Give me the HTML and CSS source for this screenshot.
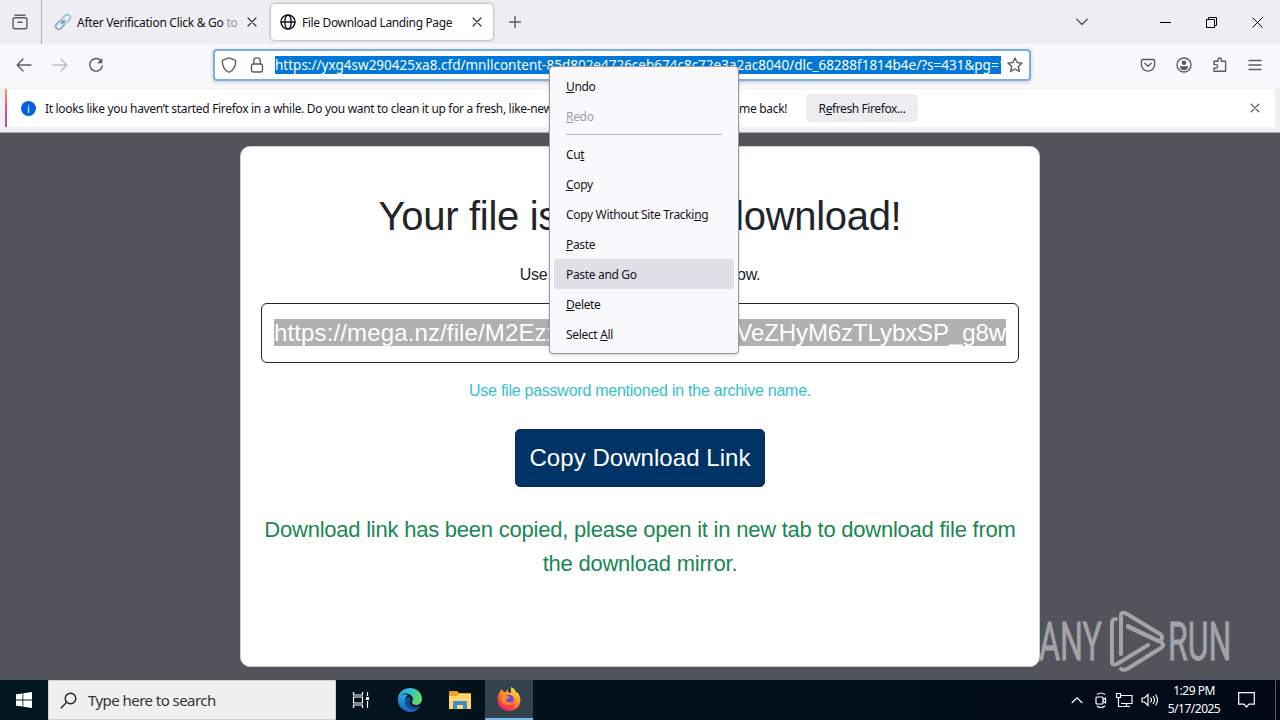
FILE: index.html
```html
<!DOCTYPE html>
<html lang="en">
<head>
    <meta charset="UTF-8">
    <meta name="viewport" content="width=device-width, initial-scale=1.0">
    <title>File Download Landing Page</title>
    <link rel="stylesheet" href="styles.css">
</head>
<body>
    <div class="desktop">
        <!-- tabs -->
        <div class="tab-bar">
            <div class="firefox-view">
                <svg class="icon" width="16" height="16" viewBox="0 0 16 16"><path d="M3 1.2h10"/><rect x="1" y="3.8" width="14" height="11" rx="2.2"/><path d="M6 8.3h4"/></svg>
            </div>
            <div class="tab">
                <svg width="18" height="18" viewBox="0 0 18 18" fill="none"><g transform="rotate(-45 9 9)"><rect x="0" y="6" width="9.5" height="6" rx="3" stroke="#7fb0c8" stroke-width="1.8"/><rect x="8.5" y="6" width="9.5" height="6" rx="3" stroke="#9cc4d6" stroke-width="1.8"/><path d="M6 9h6" stroke="#628da2" stroke-width="1.4"/></g></svg>
                <span class="tab-title tab-title-first">After Verification Click &amp; Go <span class="faded">to</span></span>
                <svg class="icon dark" width="10" height="10" viewBox="0 0 10 10"><path d="M1 1l8 8M9 1L1 9"/></svg>
            </div>
            <div class="tab active">
                <svg class="icon globe" width="16" height="16" viewBox="0 0 16 16"><circle cx="8" cy="8" r="7"/><ellipse cx="8" cy="8" rx="3.2" ry="7"/><path d="M1 8h14"/></svg>
                <span class="tab-title">File Download Landing Page</span>
                <svg class="icon dark" width="10" height="10" viewBox="0 0 10 10"><path d="M1 1l8 8M9 1L1 9"/></svg>
            </div>
            <svg class="icon new-tab" width="12" height="12" viewBox="0 0 12 12"><path d="M6 .5v11M.5 6h11"/></svg>
            <div class="window-buttons">
                <svg class="icon" width="12" height="8" viewBox="0 0 12 8"><path d="M.7 1.2L6 6.5l5.300-5.300"/></svg>
                <svg class="icon black" width="11" height="11" viewBox="0 0 11 11"><path d="M0 5.500h11"/></svg>
                <svg class="icon black" width="11" height="11" viewBox="0 0 11 11"><path d="M.5 2.500h8v8h-8zM2.500 2.500v-2h8v8h-2"/></svg>
                <svg class="icon black thin" width="11" height="11" viewBox="0 0 11 11"><path d="M.5.5l10 10M10.500.5l-10 10"/></svg>
            </div>
        </div>

        <!-- toolbar -->
        <div class="nav-bar">
            <div class="nav-buttons">
                <svg class="icon" width="16" height="14" viewBox="0 0 16 14"><path d="M15 7H1.500M7 1L1.200 7 7 13"/></svg>
                <svg class="icon disabled" width="16" height="14" viewBox="0 0 16 14"><path d="M1 7h13.500M9 1l5.800 6L9 13"/></svg>
                <svg class="icon" width="16" height="16" viewBox="0 0 16 16"><path d="M12.800 3.600A6.300 6.300 0 1 0 14.300 9"/><path d="M14.300 1v5.200H9z" fill="#5b5b66" stroke="none"/></svg>
            </div>
            <div class="url-bar">
                <svg class="icon" width="16" height="16" viewBox="0 0 16 16"><path d="M8 .9l6 2.300c.5.200.700.600.700 1.100-.1 5-2.200 8.700-6 10.700-.5.200-.9.200-1.400 0-3.800-2-5.900-5.700-6-10.700 0-.5.200-.9.700-1.100z"/></svg>
                <svg class="icon" width="14" height="16" viewBox="0 0 14 16"><rect x="1.500" y="7" width="11" height="8" rx="1.800"/><path d="M3.700 7V4.200a3.300 3.300 0 0 1 6.600 0V7"/></svg>
                <div class="url"><span>https://yxg4sw290425xa8.cfd/mnllcontent-85d802e4726ceb674c8c72e3a2ac8040/dlc_68288f1814b4e/?s=431&amp;pg=1</span></div>
                <svg class="icon" width="16" height="16" viewBox="0 0 16 16"><path d="M8 1l2.100 4.500 4.900.6-3.600 3.400.9 4.900L8 12l-4.300 2.400.9-4.900L1 6.100l4.900-.6z"/></svg>
            </div>
            <div class="nav-tools">
                <svg class="icon" width="16" height="16" viewBox="0 0 16 16"><path d="M3 2.500h10c1 0 1.600.6 1.600 1.600v3.400a6.600 6.600 0 0 1-13.200 0V4.100c0-1 .6-1.600 1.600-1.600z"/><path d="M4.800 6.300L8 9.300l3.200-3"/></svg>
                <svg class="icon" width="16" height="16" viewBox="0 0 16 16"><circle cx="8" cy="8" r="7"/><circle cx="8" cy="5.800" r="2.300" fill="#5b5b66" stroke="none"/><path d="M3.800 9.200h8.400c0 2.500-1.900 4-4.200 4s-4.200-1.500-4.200-4z" fill="#5b5b66" stroke="none"/></svg>
                <svg class="icon" width="16" height="16" viewBox="0 0 16 16"><path d="M2 14.300V11h2a1.700 1.700 0 0 0 0-3.400H2V4.300h4V2.700a1.700 1.700 0 0 1 3.400 0v1.600h4.200v10z"/></svg>
                <svg class="icon" width="14" height="12" viewBox="0 0 14 12"><path d="M1 1.500h12M1 6h12M1 10.500h12"/></svg>
            </div>
        </div>

        <div class="notification">
            <span class="info">i</span>
            <span class="notification-text">It looks like you haven’t started Firefox in a while. Do you want to clean it up for a fresh, like-new experience? And by the way, welcome back!</span>
            <button class="refresh">R<u>e</u>fresh Firefox...</button>
            <svg class="icon close" width="10" height="10" viewBox="0 0 10 10"><path d="M1 1l8 8M9 1L1 9"/></svg>
        </div>

        <!-- page -->
        <div class="page">
            <div class="card">
                <h1>Your file is ready to download!</h1>
                <p class="lead">Use the download link given below.</p>
                <div class="link-box"><div class="link-text"><span class="link-start">https://mega.nz/file/M2Ezx</span><span class="link-end">VeZHyM6zTLybxSP_g8w</span></div></div>
                <p class="password">Use file password mentioned in the archive name.</p>
                <button class="copy-button">Copy Download Link</button>
                <p class="success">Download link has been copied, please open it in new tab to download file from the download mirror.</p>
            </div>
        </div>

        <svg class="watermark" width="196" height="66" viewBox="0 0 196 66">
            <g class="watermark-text">
                <text transform="translate(2 52) scale(.61 1)" textLength="103" lengthAdjust="spacingAndGlyphs">ANY</text>
                <text transform="translate(131 52) scale(.61 1)" textLength="104" lengthAdjust="spacingAndGlyphs">RUN</text>
            </g>
            <path d="M79 11c-3 0-4 1-4 4v39c0 3 3 3 5 2l31-19M84 46V8c0-4 3-4 6-2l33 20c4 3 2 6-2 7L91 19M84 46V18M84 61c2 1 4 1 6 0l34-21c3-2 3-4 0-6L91 18"/>
        </svg>

        <!-- taskbar -->
        <div class="taskbar">
            <div class="start">
                <svg width="16" height="16" viewBox="0 0 16 16" fill="#fff"><path d="M0 2.300L6.500 1.400v6.200H0zM7.300 1.300L16 0v7.600H7.300zM0 8.400h6.500v6.200L0 13.700zM7.300 8.400H16V16l-8.700-1.300z"/></svg>
            </div>
            <div class="search">
                <svg width="17" height="17" viewBox="0 0 17 17" fill="none" stroke="#222" stroke-width="1.400"><circle cx="10.500" cy="6.500" r="5.300"/><path d="M6.700 10.300L.8 16.200"/></svg>
                <span>Type here to search</span>
            </div>
            <div class="task">
                <svg width="18" height="16" viewBox="0 0 18 16" fill="none" stroke="#fff" stroke-width="1.200"><path d="M1.500 0v3h9V0M1.500 16v-3h9v3M1.500 5h9v6h-9zM15.500 0v4M15.500 9v7"/><path d="M14 5h3v3h-3z" fill="#fff" stroke="none"/></svg>
            </div>
            <div class="task">
                <svg width="24" height="24" viewBox="0 0 24 24">
                    <defs>
                        <linearGradient id="edgeTop" x1="0" y1="0" x2="1" y2=".3"><stop offset="0" stop-color="#259ee6"/><stop offset=".55" stop-color="#30c3cf"/><stop offset="1" stop-color="#63dc63"/></linearGradient>
                        <linearGradient id="edgeSide" x1="0" y1="0" x2="0" y2="1"><stop offset="0" stop-color="#27a7ed"/><stop offset="1" stop-color="#1261bd"/></linearGradient>
                    </defs>
                    <path d="M0 11C2 6 8 4 12.500 7c3 2 3 5 1.300 7 0 2 2 3 4.500 3 3 0 5.700-2.400 5.700-6C24 5 19 0 12 0 5 0 0 5 0 11z" fill="url(#edgeTop)"/>
                    <path d="M0 11c1-4 6-6 10-4-4 2-4 9 0 12 4 3 9 2 12-1-2 4-6 6-10 6C5 24-.5 18 0 11z" fill="url(#edgeSide)"/>
                    <path d="M9.500 8.500C5 12 7 20 13 21c4 .6 7-1 9-3.300-4 2-9 1-10-2.700-.5-2 1-2.500.7-4-.3-1.400-1.500-2.300-3.200-2.500z" fill="#114a8b"/>
                </svg>
            </div>
            <div class="task">
                <svg width="22" height="19" viewBox="0 0 22 19"><path d="M0 1q0-1 1-1h7l2 2h11q1 0 1 1v14H0z" fill="#e8a321"/><path d="M0 5h8l2-2h12v15H0z" fill="#ffd667"/><path d="M4 18v-7q0-1 1-1h12q1 0 1 1v7h-4v-4H8v4z" fill="#3b8fd0"/></svg>
            </div>
            <div class="task running">
                <svg width="24" height="24" viewBox="0 0 24 24">
                    <defs>
                        <linearGradient id="flame" x1=".85" y1="0" x2=".2" y2="1"><stop offset="0" stop-color="#fff44f"/><stop offset=".4" stop-color="#ff9827"/><stop offset=".7" stop-color="#ff4e3d"/><stop offset="1" stop-color="#e51587"/></linearGradient>
                    </defs>
                    <path d="M3 5l1-3 3 3h2l2-3v3l3 1V0c3 1 4 3 5 5l2 1c2 3 3 6 2 10-1 5-6 8-11 8S2 21 1 15C0 11 1 8 3 5z" fill="url(#flame)"/>
                    <circle cx="12" cy="12.500" r="4.800" fill="#7145d8"/>
                    <path d="M4 8c3-1 5-1 6 1l3 1c-1 2-4 1-4 3 1 3 5 3 7 1-1 4-8 6-11 1-1-2-1-5-1-7z" fill="#ff8a2a"/>
                </svg>
            </div>
            <div class="tray">
                <svg width="12" height="7" viewBox="0 0 12 7"><path d="M.7 6L6 .9 11.300 6"/></svg>
                <svg width="14" height="16" viewBox="0 0 14 16"><rect x="2" y="5" width="7" height="7" rx="1"/><path d="M9 7.500l2.500-1.500v5L9 9.500M3 2.500q4-3 8 0M3 14q4 3 8 0"/></svg>
                <svg width="17" height="14" viewBox="0 0 17 14"><path d="M5 2.500h11v8H5M10.500 10.500v3M7 13.500h7M.5.5h4v4h-4zM2.500 4.500v9h4"/></svg>
                <svg width="18" height="14" viewBox="0 0 18 14"><path d="M1 5h2.500L7 1.500v11L3.500 9H1zM9.500 4.500q2 2.500 0 5M12 3q3 4 0 8M14.500 1.500q4 5.500 0 11"/></svg>
                <div class="clock"><span>1:29 PM</span><span>5/17/2025</span></div>
                <svg width="17" height="16" viewBox="0 0 17 16"><path d="M.7.7h15.600v11.500H11L8.500 15 6 12.200H.7z"/></svg>
            </div>
            <div class="show-desktop"></div>
        </div>

        <div class="context-menu">
            <div class="menu-item"><u>U</u>ndo</div>
            <div class="menu-item off"><u>R</u>edo</div>
            <div class="separator"></div>
            <div class="menu-item">Cu<u>t</u></div>
            <div class="menu-item"><u>C</u>opy</div>
            <div class="menu-item">Copy Without Site Tracki<u>n</u>g</div>
            <div class="menu-item"><u>P</u>aste</div>
            <div class="menu-item hover">Paste and Go</div>
            <div class="menu-item"><u>D</u>elete</div>
            <div class="menu-item">Select <u>A</u>ll</div>
        </div>
    </div>
</body>
</html>
```
FILE: styles.css
```css
* {
    box-sizing: border-box;
}
body {
    margin: 0;
    overflow: hidden;
    font-family: "Noto Sans", sans-serif;
    font-size: 12px;
    color: #15141a;
}
svg {
    display: block;
    flex-shrink: 0;
}
button {
    font-family: inherit;
}
.desktop {
    position: relative;
    display: flex;
    flex-direction: column;
    width: 1280px;
    height: 720px;
}
.icon {
    fill: none;
    stroke: #5b5b66;
    stroke-width: 1.4;
    stroke-linecap: round;
    stroke-linejoin: round;
}
.dark {
    stroke: #333;
    stroke-width: 1.2;
}
.black {
    stroke: #000;
    stroke-width: 1;
    stroke-linecap: butt;
    stroke-linejoin: miter;
}
.disabled {
    stroke: #bdbdc3;
}

/* tabs */
.tab-bar {
    display: flex;
    align-items: center;
    height: 44px;
    background: #eeeef3;
}
.firefox-view {
    display: flex;
    align-items: center;
    justify-content: center;
    width: 42px;
    height: 44px;
    padding-right: 1px;
    border-right: 1px solid #aaaab0;
}
.tab {
    display: flex;
    align-items: center;
    width: 222px;
    height: 36px;
    padding: 0 11px;
}
.tab:nth-child(2) {
    width: 226px;
    margin-right: 3px;
    padding-left: 12px;
}
.active {
    background: #fff;
    border-radius: 4px;
    box-shadow: 0 0 3px rgba(0, 0, 0, 0.45);
    padding: 0 11px 0 9px;
}
.globe {
    stroke: #15141a;
}
.tab-title {
    flex: 1;
    margin-left: 6px;
    white-space: nowrap;
    letter-spacing: -0.36px;
}
.tab-title-first {
    margin-left: 5px;
    letter-spacing: -0.28px;
}
.faded {
    color: #999;
}
.new-tab {
    margin-left: 16px;
}
.window-buttons {
    display: flex;
    align-items: center;
    margin-left: auto;
    padding-right: 17px;
}
.window-buttons svg:nth-child(2) {
    margin-left: 72px;
}
.window-buttons svg:nth-child(n+3) {
    margin-left: 35px;
}

/* toolbar */
.nav-bar {
    display: flex;
    align-items: center;
    height: 44px;
    padding: 0 18px 3px 16px;
    background: #f9f9fb;
}
.nav-buttons {
    display: flex;
    align-items: center;
    gap: 20px;
    width: 197px;
}
.url-bar {
    display: flex;
    align-items: center;
    width: 818px;
    height: 32px;
    padding: 0 6px;
    background: #fff;
    border: 2px solid #7caee6;
    border-radius: 4px;
    box-shadow: 0 1px 4px rgba(0, 0, 0, 0.2);
}
.url-bar svg:nth-child(2) {
    margin-left: 13px;
}
.url {
    width: 726px;
    height: 18px;
    margin: 0 6px 0 11px;
    overflow: hidden;
    white-space: nowrap;
    color: #fff;
    background: #0078d7;
    font-size: 13.5px;
    line-height: 19px;
}
.nav-tools {
    display: flex;
    align-items: center;
    gap: 20px;
    margin-left: auto;
}
.notification {
    display: flex;
    align-items: center;
    height: 45px;
    padding: 0 20px 4px 14px;
    background: linear-gradient(#ff9a4e, #e0568a, #9059c0) 5px 1px / 2px 38px no-repeat, linear-gradient(#fff, #fff) 7px 1px / 1268px 38px no-repeat, #f0f0f4;
    border-bottom: 1px solid #a8a8ae;
}
.info {
    width: 15px;
    height: 15px;
    margin-left: 7px;
    border-radius: 50%;
    background: #0060df;
    color: #fff;
    font-size: 11px;
    line-height: 15px;
    text-align: center;
}
.notification-text {
    width: 741px;
    margin-left: 9px;
    white-space: nowrap;
    letter-spacing: -0.32px;
}
.refresh {
    width: 112px;
    height: 28px;
    margin-left: 20px;
    padding: 0;
    border: none;
    border-radius: 4px;
    background: #ededf0;
    color: #15141a;
    font-size: 12px;
    letter-spacing: -0.4px;
}
.close {
    margin-left: auto;
    stroke-width: 1.1;
}

/* page */
.page {
    display: flex;
    justify-content: center;
    height: 547px;
    padding-top: 13px;
    background: #53545b;
    font-family: "Liberation Sans", Arial, sans-serif;
}
.card {
    display: flex;
    flex-direction: column;
    align-items: center;
    width: 800px;
    height: 521px;
    padding: 45px 20px 0;
    background: #fff;
    border: 1px solid #d0d0d2;
    border-radius: 10px;
    text-align: center;
    color: #212529;
}
h1 {
    margin: 0;
    font-size: 40px;
    font-weight: 400;
    line-height: 48px;
    white-space: nowrap;
    letter-spacing: -0.3px;
}
p {
    margin: 0;
    font-size: 16px;
    line-height: 24px;
    letter-spacing: -0.25px;
}
.lead {
    margin-top: 23px;
}
.link-box {
    display: flex;
    align-items: center;
    width: 758px;
    height: 60px;
    margin: 16px 0 16px;
    padding: 0 12px 2px;
    border: 1px solid #212529;
    border-radius: 6px;
}
.link-text {
    display: flex;
    justify-content: space-between;
    width: 732px;
    background: #b0b0b0;
    color: #fff;
    font-size: 24px;
    line-height: 27px;
}
.link-start {
    letter-spacing: 0.13px;
}
.link-end {
    letter-spacing: -0.08px;
}
.password {
    color: #35bfd0;
}
.copy-button {
    width: 250px;
    height: 58px;
    margin: 26px 0 26px;
    padding: 0;
    border: 1px solid #10294a;
    border-radius: 5px;
    background: #003366;
    color: #fff;
    font-size: 24px;
    white-space: nowrap;
    letter-spacing: 0.05px;
}
.success {
    color: #198754;
    font-size: 22px;
    line-height: 34px;
    letter-spacing: -0.23px;
}
.watermark {
    position: absolute;
    left: 1037px;
    top: 608px;
    fill: none;
    stroke: #a2a4a8;
    stroke-width: 4;
    stroke-linejoin: round;
    stroke-linecap: round;
}
.watermark-text {
    fill: #a2a4a8;
    stroke: #a2a4a8;
    stroke-width: 0.8;
    font-family: Roboto, sans-serif;
    font-size: 53px;
}

/* taskbar */
.taskbar {
    display: flex;
    height: 40px;
    background: linear-gradient(90deg, #03161f, #02101a 60%, #010918);
}
.start, .task {
    display: flex;
    align-items: center;
    justify-content: center;
    width: 48px;
}
.search {
    display: flex;
    align-items: center;
    width: 288px;
    padding-left: 11px;
    background: #f0f0f0;
    border: 1px solid #d0d0d0;
    color: #333;
    font-size: 15px;
    letter-spacing: -0.55px;
}
.search span {
    margin-left: 11px;
}
.task {
    width: 50px;
}
.task:nth-child(3) {
    width: 49px;
}
.running {
    width: 48px;
    background: #33434d;
    border-bottom: 2px solid #76b9ed;
}
.tray {
    display: flex;
    align-items: center;
    margin-left: auto;
    color: #fff;
}
.tray svg {
    fill: none;
    stroke: #fff;
    stroke-width: 1.2;
    margin-right: 8px;
}
.tray svg:first-child {
    margin-right: 11px;
}
.tray svg:last-child {
    margin: 0;
}
.clock {
    display: flex;
    flex-direction: column;
    align-items: center;
    width: 54px;
    margin-right: 17px;
    line-height: 18px;
    letter-spacing: -0.5px;
}
.show-desktop {
    width: 5px;
    margin-left: 20px;
    border-left: 1px solid #4b5260;
}

/* context menu */
.context-menu {
    position: absolute;
    left: 549px;
    top: 66px;
    width: 190px;
    height: 288px;
    padding: 4px;
    background: #f9f9fb;
    border: 1px solid #98989e;
    border-radius: 4px;
    box-shadow: 0 1px 3px rgba(0, 0, 0, 0.2);
}
.menu-item {
    height: 30px;
    padding-left: 12px;
    border-radius: 2px;
    line-height: 31px;
    letter-spacing: -0.33px;
}
.off {
    color: #a0a0a5;
}
.hover {
    background: #e0e0e8;
}
.separator {
    height: 1px;
    margin: 3px 12px 4px;
    background: #bbbbc0;
}
```
